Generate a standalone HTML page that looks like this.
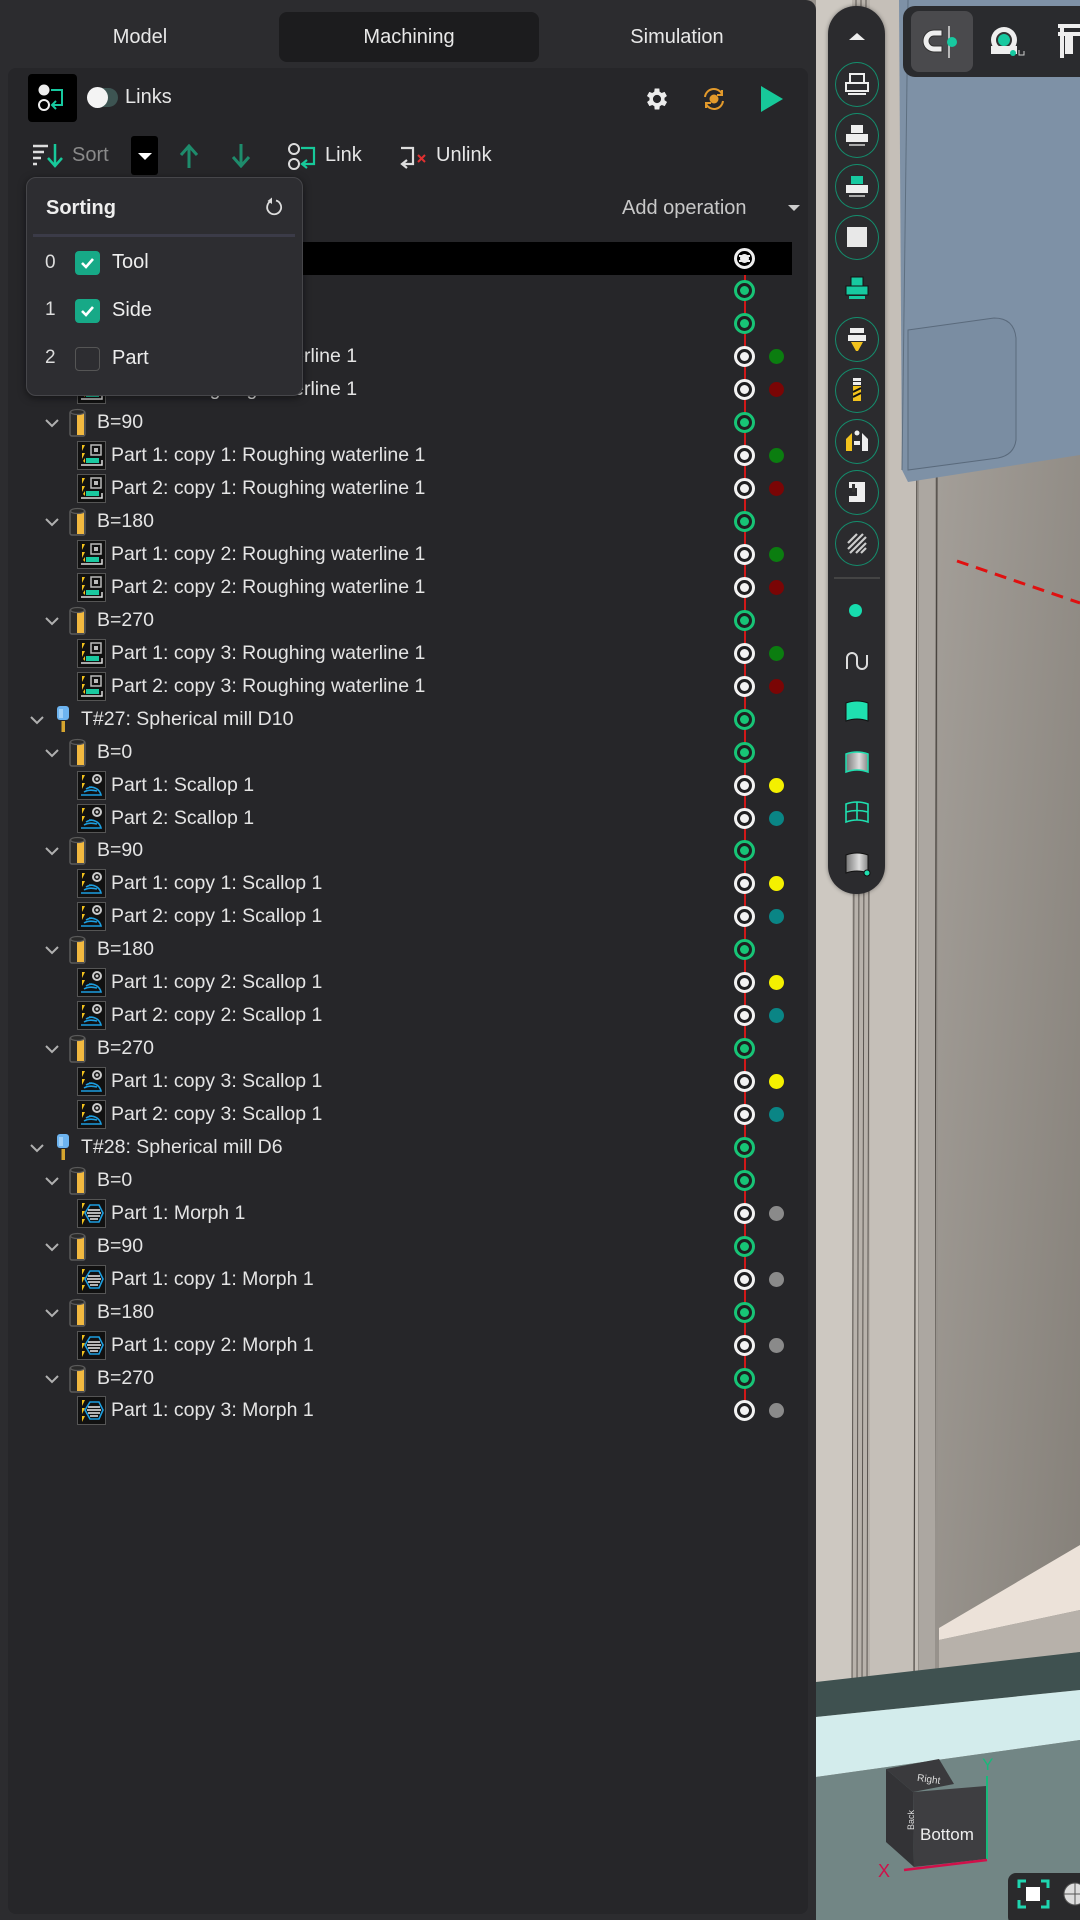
<!DOCTYPE html>
<html><head><meta charset="utf-8">
<style>
*{margin:0;padding:0;box-sizing:border-box}
body{width:1080px;height:1920px;overflow:hidden;background:#97928c;font-family:"Liberation Sans",sans-serif;position:relative}
.abs{position:absolute}
#panel{position:absolute;left:0;top:0;width:816px;height:1920px;background:#2c2c2f;border-radius:0 10px 0 0}
#inner{position:absolute;left:8px;top:68px;width:800px;height:1846px;background:#262629;border-radius:8px}
.tab{position:absolute;top:12px;height:50px;line-height:50px;text-align:center;color:#e8e8e8;font-size:20px}
.r{position:absolute;left:0;width:816px;height:33px}
.t{position:absolute;top:0;line-height:33px;font-size:19.5px;color:#e4e4e4;white-space:nowrap}
.ch{position:absolute;top:8px;width:18px;height:18px}
.ti{position:absolute;top:3px;width:16px;height:28px}
.bi{position:absolute;top:2px;width:20px;height:30px}
.oi{position:absolute;left:77px;top:2px;width:29px;height:29px}
.c{position:absolute;left:734px;top:6px;width:21px;height:21px;border-radius:50%;border:3px solid #f2f2f2;background:#1f1f21}
.c::after{content:"";position:absolute;left:3px;top:3px;width:9px;height:9px;border-radius:50%;background:#f2f2f2}
.c.g{border-color:#17c476}
.c.g::after{background:#17c476}
.d{position:absolute;left:769px;top:9px;width:15px;height:15px;border-radius:50%}
.pb{position:absolute;left:835px;width:44px;height:45px;border-radius:50%;border:1.5px solid #148c6c}
.pbi{position:absolute;left:843px;width:28px;height:28px}
</style></head><body>

<svg width="0" height="0" style="position:absolute">
<defs>
<symbol id="chev" viewBox="0 0 18 18"><polyline points="3,6 9,12 15,6" fill="none" stroke="#b0b0b0" stroke-width="2"/></symbol>
<symbol id="tool" viewBox="0 0 16 28"><rect x="2" y="0" width="12" height="14" rx="3" fill="#6db4f0"/><rect x="4" y="3" width="4" height="9" fill="#9fd0f7"/><rect x="6.5" y="15" width="3.5" height="11" fill="#d6a52e"/></symbol>
<symbol id="side" viewBox="0 0 20 30"><rect x="2" y="3" width="15" height="25" rx="2" fill="#2a2a2a" stroke="#5a5a5a" stroke-width="1.5"/><rect x="9" y="5" width="7" height="22" fill="#f2b940"/><ellipse cx="9.5" cy="4" rx="7" ry="2.5" fill="#2a2a2a" stroke="#5a5a5a" stroke-width="1.2"/></symbol>
<symbol id="rough" viewBox="0 0 29 29"><rect x="0.5" y="0.5" width="28" height="28" fill="#111" stroke="#555"/><path d="M5 4 L8 4 L5 10 Z M5 12 L8 12 L5 18 Z M6 20 L8 17 L8 22 Z" fill="#f2c21d"/><rect x="14" y="4" width="10" height="10" fill="none" stroke="#bbb" stroke-width="1.5"/><rect x="17" y="7" width="4" height="4" fill="#bbb"/><rect x="9" y="17" width="13" height="5" fill="#1ac9a0"/><path d="M4 24 L25 24 L25 19" fill="none" stroke="#ddd" stroke-width="1.5"/></symbol>
<symbol id="scal" viewBox="0 0 29 29"><rect x="0.5" y="0.5" width="28" height="28" fill="#111" stroke="#555"/><path d="M5 4 L8 4 L5 10 Z M5 12 L8 12 L5 18 Z" fill="#f2c21d"/><circle cx="20" cy="8" r="4" fill="none" stroke="#ccc" stroke-width="2"/><circle cx="20" cy="8" r="1.5" fill="#ccc"/><path d="M4 24 L24 24 Q22 16 12 16 M7 21 Q12 18 20 20 M9 18 Q14 15 18 17" fill="none" stroke="#1c9ee0" stroke-width="1.6"/></symbol>
<symbol id="morph" viewBox="0 0 29 29"><rect x="0.5" y="0.5" width="28" height="28" fill="#111" stroke="#555"/><path d="M5 4 L8 4 L5 10 Z M5 12 L8 12 L5 18 Z M5 20 L8 20 L5 26 Z" fill="#f2c21d"/><path d="M8 14 L13 6 L22 6 L26 14 L22 23 L13 23 Z" fill="none" stroke="#1c9ee0" stroke-width="1.6"/><path d="M11 11 H23 M10 14 H24 M11 17 H23 M13 20 H21" stroke="#eee" stroke-width="1.4"/></symbol>
</defs></svg>

<!-- Scene -->
<svg class="abs" style="left:816px;top:0" width="264" height="1920" viewBox="0 0 264 1920">
<defs><linearGradient id="wall" x1="0" y1="0" x2="1" y2="1"><stop offset="0" stop-color="#a8a39d"/><stop offset="1" stop-color="#858079"/></linearGradient></defs>
<rect width="264" height="1920" fill="#97928c"/>
<rect x="122" y="0" width="142" height="1700" fill="url(#wall)"/>
<rect x="0" y="0" width="36" height="1690" fill="#cdc8c1"/>
<rect x="36" y="0" width="18" height="1690" fill="#b8b2ab"/>
<path d="M40 0 L36 1690 M45 0 L41 1690 M50 0 L46 1690 M55 0 L51 1690" stroke="#5a5550" stroke-width="1"/>
<rect x="54" y="0" width="48" height="1700" fill="#c5bfb8"/>
<path d="M102 0 L98 1700 M122 0 L118 1700" stroke="#4a4540" stroke-width="1.2"/>
<rect x="103" y="0" width="16" height="1700" fill="#aca7a1"/>
<polygon points="83,0 264,0 264,455 92,482 86,470" fill="#7e91a6"/>
<path d="M92 330 L178 318 Q198 318 200 338 L200 440 Q198 455 182 458 L92 470 Z" fill="#7a8da2" stroke="#5a6a7c" stroke-width="1"/>
<path d="M92 0 L86 470" stroke="#5e6f80" stroke-width="1"/>
<path d="M141 561 L264 603" stroke="#e01010" stroke-width="3" stroke-dasharray="12 8"/>
<polygon points="123,1628 264,1545 264,1610 123,1640" fill="#ece2d9"/>
<polygon points="123,1640 264,1610 264,1652 123,1670" fill="#b7b1aa"/>
<polygon points="0,1682 264,1652 264,1690 0,1717" fill="#3f5150"/>
<polygon points="0,1717 264,1690 264,1740 0,1777" fill="#d3ecec"/>
<polygon points="0,1777 264,1740 264,1920 0,1920" fill="#728685"/>
<polygon points="70,1769 123,1759 138,1784 97,1792" fill="#3a3a3d"/>
<polygon points="70,1769 97,1792 98,1867 70,1842" fill="#333336"/>
<polygon points="97,1792 170,1786 170,1859 98,1867" fill="#3e3e41"/>
<text x="104" y="1840" font-size="17" fill="#eee" font-family="Liberation Sans">Bottom</text>
<text x="101" y="1782" font-size="10" fill="#ddd" font-family="Liberation Sans" transform="rotate(8 110 1780)">Right</text>
<text x="88" y="1840" font-size="9" fill="#ddd" font-family="Liberation Sans" transform="rotate(-90 88 1830)">Back</text>
<path d="M171 1776 L171 1859" stroke="#18b97a" stroke-width="2"/>
<path d="M88 1870 L171 1860" stroke="#d0104a" stroke-width="2.5"/>
<text x="166" y="1770" font-size="17" fill="#18b97a" font-family="Liberation Sans">Y</text>
<text x="62" y="1877" font-size="18" fill="#d0104a" font-family="Liberation Sans">X</text>
<rect x="192" y="1873" width="80" height="52" rx="8" fill="#2a2a2c"/>
<path d="M203 1888 V1881 H210 M225 1881 H232 V1888 M232 1900 V1907 H225 M210 1907 H203 V1900" fill="none" stroke="#1fd6b0" stroke-width="3"/>
<rect x="210" y="1887" width="14" height="14" fill="#fff"/>
<circle cx="259" cy="1894" r="11" fill="#ddd" stroke="#555"/>
<path d="M248 1894 H270 M259 1883 V1905" stroke="#555"/>
</svg>

<!-- top right toolbar -->
<div class="abs" style="left:903px;top:6px;width:190px;height:71px;background:#2a2b2e;border-radius:12px"></div>
<div class="abs" style="left:911px;top:11px;width:62px;height:61px;background:#4a4a4d;border-radius:8px"></div>
<svg class="abs" style="left:920px;top:22px" width="46" height="40" viewBox="0 0 46 40"><path d="M22 8 H14 A11 11 0 0 0 14 30 H22 V24 H14 A5 5 0 0 1 14 14 H22 Z" fill="#eee" stroke="#333"/><path d="M29 4 V36" stroke="#ddd" stroke-width="1.5"/><circle cx="32" cy="20" r="5" fill="#17c9a0"/></svg>
<svg class="abs" style="left:988px;top:24px" width="40" height="36" viewBox="0 0 40 36"><circle cx="16" cy="16" r="13" fill="#eee"/><circle cx="16" cy="16" r="7" fill="#17c9a0" stroke="#333" stroke-width="2"/><rect x="3" y="22" width="26" height="8" fill="#eee"/><circle cx="25" cy="29" r="3" fill="#17c9a0"/><path d="M31 26 V31 H36 V27" stroke="#ccc" fill="none"/></svg>
<svg class="abs" style="left:1056px;top:22px" width="24" height="40" viewBox="0 0 24 40"><path d="M2 4 H24 M6 4 V36 M2 12 H24" stroke="#eee" stroke-width="4" fill="none"/><rect x="9" y="14" width="8" height="18" fill="#eee"/></svg>

<!-- side pill -->
<div class="abs" style="left:828px;top:6px;width:57px;height:888px;background:#2b2b2e;border-radius:28px;box-shadow:0 0 4px rgba(0,0,0,.4)"></div>
<div class="abs" style="left:849px;top:33px;width:0;height:0;border-left:8px solid transparent;border-right:8px solid transparent;border-bottom:7px solid #eee"></div>
<div class="pb" style="top:62px"></div>
<svg class="pbi" style="top:70px" viewBox="0 0 28 28"><rect x="7" y="4" width="14" height="9" fill="none" stroke="#eee" stroke-width="2"/><rect x="3" y="13" width="22" height="8" fill="none" stroke="#eee" stroke-width="2"/><rect x="5" y="23" width="18" height="2" fill="#eee"/></svg>
<div class="pb" style="top:113px"></div>
<svg class="pbi" style="top:121px" viewBox="0 0 28 28"><rect x="8" y="4" width="12" height="8" fill="#eee"/><rect x="3" y="13" width="22" height="8" fill="#eee"/><rect x="6" y="23" width="16" height="2" fill="#aaa"/></svg>
<div class="pb" style="top:164px"></div>
<svg class="pbi" style="top:172px" viewBox="0 0 28 28"><rect x="8" y="4" width="12" height="8" fill="#17c9a0"/><rect x="3" y="13" width="22" height="8" fill="#eee"/><rect x="6" y="23" width="16" height="2" fill="#aaa"/></svg>
<div class="pb" style="top:215px"></div>
<svg class="pbi" style="top:223px" viewBox="0 0 28 28"><rect x="4" y="4" width="20" height="20" fill="#e8e8e8"/></svg>
<svg class="pbi" style="top:274px" viewBox="0 0 28 28"><rect x="8" y="3" width="12" height="9" fill="#17c9a0" stroke="#111"/><rect x="3" y="12" width="22" height="9" fill="#17c9a0" stroke="#111"/><rect x="6" y="22" width="16" height="3" fill="#17c9a0"/></svg>
<div class="pb" style="top:317px"></div>
<svg class="pbi" style="top:325px" viewBox="0 0 28 28"><rect x="7" y="3" width="14" height="5" fill="#eee"/><rect x="5" y="10" width="18" height="6" fill="#eee"/><path d="M8 17 H20 L15 26 H13 Z" fill="#f2c21d"/></svg>
<div class="pb" style="top:368px"></div>
<svg class="pbi" style="top:376px" viewBox="0 0 28 28"><rect x="10" y="2" width="8" height="3" fill="#eee"/><rect x="10" y="6" width="8" height="3" fill="#eee"/><rect x="10" y="10" width="8" height="15" fill="#f2c21d"/><path d="M10 16 L18 12 M10 21 L18 17" stroke="#111" stroke-width="2"/></svg>
<div class="pb" style="top:419px"></div>
<svg class="pbi" style="top:427px" viewBox="0 0 28 28"><path d="M3 24 V12 L9 6 V24 Z" fill="#f2c21d"/><path d="M19 6 L25 12 V24 H19 Z" fill="#eee"/><circle cx="14" cy="6" r="2.5" fill="#eee"/><rect x="11" y="14" width="6" height="4" fill="#eee"/></svg>
<div class="pb" style="top:470px"></div>
<svg class="pbi" style="top:478px" viewBox="0 0 28 28"><path d="M6 4 H22 V24 H6 V18 H14 V10 H6 Z" fill="#eee"/><rect x="9" y="6" width="3" height="8" fill="#333"/></svg>
<div class="pb" style="top:521px"></div>
<svg class="pbi" style="top:529px" viewBox="0 0 28 28"><path d="M5 14 L14 5 M5 20 L20 5 M7 24 L23 8 M13 24 L23 14 M18 24 L23 19" stroke="#ccc" stroke-width="2.2"/></svg>
<div class="abs" style="left:834px;top:577px;width:46px;height:2px;background:#444"></div>
<div class="abs" style="left:849px;top:604px;width:13px;height:13px;border-radius:50%;background:#17dcae"></div>
<svg class="pbi" style="top:647px" viewBox="0 0 28 28"><path d="M4 22 V11 A5 5 0 0 1 14 11 V17 A5 5 0 0 0 24 17 V8" fill="none" stroke="#ddd" stroke-width="2"/></svg>
<svg class="pbi" style="top:697px" viewBox="0 0 28 28"><path d="M3 6 Q14 2 25 6 V24 Q14 20 3 24 Z" fill="#1fe0b0" stroke="#111"/></svg>
<svg class="pbi" style="top:748px" viewBox="0 0 28 28"><defs><linearGradient id="mg" x1="0" x2="1"><stop offset="0" stop-color="#777"/><stop offset=".6" stop-color="#ddd"/><stop offset="1" stop-color="#888"/></linearGradient></defs><path d="M3 6 Q14 2 25 6 V24 Q14 20 3 24 Z" fill="url(#mg)" stroke="#1fe0b0" stroke-width="1.5"/></svg>
<svg class="pbi" style="top:798px" viewBox="0 0 28 28"><path d="M3 6 Q14 2 25 6 V24 Q14 20 3 24 Z M14 4 V22 M3 14 Q14 11 25 14" fill="none" stroke="#1fe0b0" stroke-width="1.6"/></svg>
<svg class="pbi" style="top:849px" viewBox="0 0 28 28"><path d="M3 6 Q14 2 25 6 V24 Q14 20 3 24 Z" fill="url(#mg)" stroke="#111"/><circle cx="24" cy="24" r="3" fill="#1fe0b0" stroke="#111"/></svg>

<!-- Panel -->
<div id="panel">
<div class="tab" style="left:40px;width:200px">Model</div>
<div class="tab" style="left:279px;width:260px;background:#1c1c1e;border-radius:8px">Machining</div>
<div class="tab" style="left:577px;width:200px">Simulation</div>
<div id="inner"></div>

<div class="abs" style="left:28px;top:74px;width:49px;height:48px;background:#000;border-radius:4px"></div>
<svg class="abs" style="left:34px;top:80px" width="36" height="36" viewBox="0 0 36 36"><circle cx="10" cy="10" r="5.5" fill="#eee"/><circle cx="10" cy="25" r="5" fill="none" stroke="#eee" stroke-width="2"/><path d="M17 10 H28 V25 H19 M22 21 L18 25 L22 29" fill="none" stroke="#17c9a0" stroke-width="2"/></svg>
<div class="abs" style="left:89px;top:88px;width:29px;height:19px;border-radius:10px;background:#3d5452"></div>
<div class="abs" style="left:87px;top:87px;width:21px;height:21px;border-radius:50%;background:#f4f4f4"></div>
<div class="abs" style="left:125px;top:86px;font-size:20px;color:#e6e6e6">Links</div>

<svg class="abs" style="left:643px;top:85px" width="28" height="28" viewBox="0 0 24 24"><path fill="#ececec" d="M19.4 13a7.5 7.5 0 0 0 0-2l2.1-1.6-2-3.5-2.5 1a7 7 0 0 0-1.7-1L15 3h-4l-.4 2.9a7 7 0 0 0-1.7 1l-2.5-1-2 3.5L6.6 11a7.5 7.5 0 0 0 0 2l-2.1 1.6 2 3.5 2.5-1a7 7 0 0 0 1.7 1L11 21h4l.4-2.9a7 7 0 0 0 1.7-1l2.5 1 2-3.5zM13 15.5a3.5 3.5 0 1 1 0-7 3.5 3.5 0 0 1 0 7z" transform="translate(-1 0)"/></svg>
<svg class="abs" style="left:700px;top:85px" width="28" height="28" viewBox="0 0 28 28"><circle cx="14" cy="14" r="4.5" fill="#e39a2b"/><path d="M5 12 A9 9 0 0 1 22 9 M23 16 A9 9 0 0 1 6 19" fill="none" stroke="#e39a2b" stroke-width="2"/><path d="M22 5 V10 H17 M6 23 V18 H11" fill="none" stroke="#e39a2b" stroke-width="2"/></svg>
<svg class="abs" style="left:761px;top:86px" width="22" height="26" viewBox="0 0 22 26"><path d="M0 0 L22 13 L0 26 Z" fill="#17c99a"/></svg>

<svg class="abs" style="left:33px;top:144px" width="32" height="24" viewBox="0 0 32 24"><path d="M0 2 H15 M0 8 H11 M0 14 H8 M0 20 H4" stroke="#ddd" stroke-width="2.5"/><path d="M22 0 V20 M15 14 L22 22 L29 14" fill="none" stroke="#17c99a" stroke-width="2.5"/></svg>
<div class="abs" style="left:72px;top:144px;font-size:20px;color:#8a8a8a">Sort</div>
<div class="abs" style="left:131px;top:136px;width:27px;height:39px;background:#000;border-radius:3px"></div>
<div class="abs" style="left:138px;top:153px;width:0;height:0;border-left:7px solid transparent;border-right:7px solid transparent;border-top:7px solid #fff"></div>
<svg class="abs" style="left:179px;top:144px" width="20" height="24" viewBox="0 0 20 24"><path d="M10 24 V4 M2 11 L10 2 L18 11" fill="none" stroke="#1e8c6c" stroke-width="3"/></svg>
<svg class="abs" style="left:231px;top:144px" width="20" height="24" viewBox="0 0 20 24"><path d="M10 0 V20 M2 13 L10 22 L18 13" fill="none" stroke="#1e8c6c" stroke-width="3"/></svg>
<svg class="abs" style="left:287px;top:142px" width="30" height="30" viewBox="0 0 30 30"><circle cx="7" cy="7" r="5" fill="none" stroke="#ddd" stroke-width="2"/><circle cx="7" cy="22" r="5" fill="none" stroke="#ddd" stroke-width="2"/><path d="M14 6 H27 V22 H16 M20 18 L15 22 L20 26" fill="none" stroke="#17c99a" stroke-width="2.2"/></svg>
<div class="abs" style="left:325px;top:144px;font-size:20px;color:#e6e6e6">Link</div>
<svg class="abs" style="left:399px;top:142px" width="30" height="30" viewBox="0 0 30 30"><path d="M2 6 H14 V22 H4 M8 18 L3 22 L8 26" fill="none" stroke="#ddd" stroke-width="2.2"/><path d="M19 13 L26 20 M26 13 L19 20" stroke="#e03030" stroke-width="2"/></svg>
<div class="abs" style="left:436px;top:144px;font-size:20px;color:#e6e6e6">Unlink</div>

<div class="abs" style="left:622px;top:197px;font-size:20px;color:#c8c8c8">Add operation</div>
<div class="abs" style="left:788px;top:205px;width:0;height:0;border-left:6px solid transparent;border-right:6px solid transparent;border-top:6px solid #ccc"></div>

<!-- timeline line -->
<div class="abs" style="left:744px;top:259px;width:1.5px;height:1152px;background:#d01818"></div>

<!-- rows -->
<div class="r" style="top:241.5px"><div class="abs" style="left:26px;top:0;width:766px;height:33px;background:#000"></div><div class="c" style="border-color:#eee;background:#000"></div><div class="abs" style="left:739px;top:13px;width:11px;height:2px;background:#eee"></div><div class="abs" style="left:739px;top:18px;width:11px;height:2px;background:#eee"></div></div>
<div class="r" style="top:274.4px"><svg class="ch" style="left:28px"><use href="#chev"/></svg><svg class="ti" style="left:55px"><use href="#tool"/></svg><div class="t" style="left:81px">T#26: End mill D12</div><div class="c g"></div></div>
<div class="r" style="top:307.4px"><svg class="ch" style="left:43px"><use href="#chev"/></svg><svg class="bi" style="left:68px"><use href="#side"/></svg><div class="t" style="left:97px">B=0</div><div class="c g"></div></div>
<div class="r" style="top:340.3px"><svg class="oi"><use href="#rough"/></svg><div class="t" style="left:111px">Part 1: Roughing waterline 1</div><div class="c"></div><div class="d" style="background:#0b7d10"></div></div>
<div class="r" style="top:373.3px"><svg class="oi"><use href="#rough"/></svg><div class="t" style="left:111px">Part 2: Roughing waterline 1</div><div class="c"></div><div class="d" style="background:#7a0505"></div></div>
<div class="r" style="top:406.2px"><svg class="ch" style="left:43px"><use href="#chev"/></svg><svg class="bi" style="left:68px"><use href="#side"/></svg><div class="t" style="left:97px">B=90</div><div class="c g"></div></div>
<div class="r" style="top:439.1px"><svg class="oi"><use href="#rough"/></svg><div class="t" style="left:111px">Part 1: copy 1: Roughing waterline 1</div><div class="c"></div><div class="d" style="background:#0b7d10"></div></div>
<div class="r" style="top:472.1px"><svg class="oi"><use href="#rough"/></svg><div class="t" style="left:111px">Part 2: copy 1: Roughing waterline 1</div><div class="c"></div><div class="d" style="background:#7a0505"></div></div>
<div class="r" style="top:505.0px"><svg class="ch" style="left:43px"><use href="#chev"/></svg><svg class="bi" style="left:68px"><use href="#side"/></svg><div class="t" style="left:97px">B=180</div><div class="c g"></div></div>
<div class="r" style="top:538.0px"><svg class="oi"><use href="#rough"/></svg><div class="t" style="left:111px">Part 1: copy 2: Roughing waterline 1</div><div class="c"></div><div class="d" style="background:#0b7d10"></div></div>
<div class="r" style="top:570.9px"><svg class="oi"><use href="#rough"/></svg><div class="t" style="left:111px">Part 2: copy 2: Roughing waterline 1</div><div class="c"></div><div class="d" style="background:#7a0505"></div></div>
<div class="r" style="top:603.8px"><svg class="ch" style="left:43px"><use href="#chev"/></svg><svg class="bi" style="left:68px"><use href="#side"/></svg><div class="t" style="left:97px">B=270</div><div class="c g"></div></div>
<div class="r" style="top:636.8px"><svg class="oi"><use href="#rough"/></svg><div class="t" style="left:111px">Part 1: copy 3: Roughing waterline 1</div><div class="c"></div><div class="d" style="background:#0b7d10"></div></div>
<div class="r" style="top:669.7px"><svg class="oi"><use href="#rough"/></svg><div class="t" style="left:111px">Part 2: copy 3: Roughing waterline 1</div><div class="c"></div><div class="d" style="background:#7a0505"></div></div>
<div class="r" style="top:702.7px"><svg class="ch" style="left:28px"><use href="#chev"/></svg><svg class="ti" style="left:55px"><use href="#tool"/></svg><div class="t" style="left:81px">T#27: Spherical mill D10</div><div class="c g"></div></div>
<div class="r" style="top:735.6px"><svg class="ch" style="left:43px"><use href="#chev"/></svg><svg class="bi" style="left:68px"><use href="#side"/></svg><div class="t" style="left:97px">B=0</div><div class="c g"></div></div>
<div class="r" style="top:768.5px"><svg class="oi"><use href="#scal"/></svg><div class="t" style="left:111px">Part 1: Scallop 1</div><div class="c"></div><div class="d" style="background:#f4f000"></div></div>
<div class="r" style="top:801.5px"><svg class="oi"><use href="#scal"/></svg><div class="t" style="left:111px">Part 2: Scallop 1</div><div class="c"></div><div class="d" style="background:#0a8585"></div></div>
<div class="r" style="top:834.4px"><svg class="ch" style="left:43px"><use href="#chev"/></svg><svg class="bi" style="left:68px"><use href="#side"/></svg><div class="t" style="left:97px">B=90</div><div class="c g"></div></div>
<div class="r" style="top:867.4px"><svg class="oi"><use href="#scal"/></svg><div class="t" style="left:111px">Part 1: copy 1: Scallop 1</div><div class="c"></div><div class="d" style="background:#f4f000"></div></div>
<div class="r" style="top:900.3px"><svg class="oi"><use href="#scal"/></svg><div class="t" style="left:111px">Part 2: copy 1: Scallop 1</div><div class="c"></div><div class="d" style="background:#0a8585"></div></div>
<div class="r" style="top:933.2px"><svg class="ch" style="left:43px"><use href="#chev"/></svg><svg class="bi" style="left:68px"><use href="#side"/></svg><div class="t" style="left:97px">B=180</div><div class="c g"></div></div>
<div class="r" style="top:966.2px"><svg class="oi"><use href="#scal"/></svg><div class="t" style="left:111px">Part 1: copy 2: Scallop 1</div><div class="c"></div><div class="d" style="background:#f4f000"></div></div>
<div class="r" style="top:999.1px"><svg class="oi"><use href="#scal"/></svg><div class="t" style="left:111px">Part 2: copy 2: Scallop 1</div><div class="c"></div><div class="d" style="background:#0a8585"></div></div>
<div class="r" style="top:1032.1px"><svg class="ch" style="left:43px"><use href="#chev"/></svg><svg class="bi" style="left:68px"><use href="#side"/></svg><div class="t" style="left:97px">B=270</div><div class="c g"></div></div>
<div class="r" style="top:1065.0px"><svg class="oi"><use href="#scal"/></svg><div class="t" style="left:111px">Part 1: copy 3: Scallop 1</div><div class="c"></div><div class="d" style="background:#f4f000"></div></div>
<div class="r" style="top:1097.9px"><svg class="oi"><use href="#scal"/></svg><div class="t" style="left:111px">Part 2: copy 3: Scallop 1</div><div class="c"></div><div class="d" style="background:#0a8585"></div></div>
<div class="r" style="top:1130.9px"><svg class="ch" style="left:28px"><use href="#chev"/></svg><svg class="ti" style="left:55px"><use href="#tool"/></svg><div class="t" style="left:81px">T#28: Spherical mill D6</div><div class="c g"></div></div>
<div class="r" style="top:1163.8px"><svg class="ch" style="left:43px"><use href="#chev"/></svg><svg class="bi" style="left:68px"><use href="#side"/></svg><div class="t" style="left:97px">B=0</div><div class="c g"></div></div>
<div class="r" style="top:1196.8px"><svg class="oi"><use href="#morph"/></svg><div class="t" style="left:111px">Part 1: Morph 1</div><div class="c"></div><div class="d" style="background:#8a8a8a"></div></div>
<div class="r" style="top:1229.7px"><svg class="ch" style="left:43px"><use href="#chev"/></svg><svg class="bi" style="left:68px"><use href="#side"/></svg><div class="t" style="left:97px">B=90</div><div class="c g"></div></div>
<div class="r" style="top:1262.6px"><svg class="oi"><use href="#morph"/></svg><div class="t" style="left:111px">Part 1: copy 1: Morph 1</div><div class="c"></div><div class="d" style="background:#8a8a8a"></div></div>
<div class="r" style="top:1295.6px"><svg class="ch" style="left:43px"><use href="#chev"/></svg><svg class="bi" style="left:68px"><use href="#side"/></svg><div class="t" style="left:97px">B=180</div><div class="c g"></div></div>
<div class="r" style="top:1328.5px"><svg class="oi"><use href="#morph"/></svg><div class="t" style="left:111px">Part 1: copy 2: Morph 1</div><div class="c"></div><div class="d" style="background:#8a8a8a"></div></div>
<div class="r" style="top:1361.5px"><svg class="ch" style="left:43px"><use href="#chev"/></svg><svg class="bi" style="left:68px"><use href="#side"/></svg><div class="t" style="left:97px">B=270</div><div class="c g"></div></div>
<div class="r" style="top:1394.4px"><svg class="oi"><use href="#morph"/></svg><div class="t" style="left:111px">Part 1: copy 3: Morph 1</div><div class="c"></div><div class="d" style="background:#8a8a8a"></div></div>

<!-- Sorting popup -->
<div class="abs" style="left:26px;top:177px;width:277px;height:219px;background:#2d2d31;border:1px solid #46464a;border-radius:10px;box-shadow:0 2px 8px rgba(0,0,0,.5)"></div>
<div class="abs" style="left:46px;top:197px;font-size:20px;font-weight:bold;color:#eee">Sorting</div>
<svg class="abs" style="left:264px;top:197px" width="20" height="20" viewBox="0 0 20 20"><path d="M7 4 A7 7 0 1 0 12 3.5" fill="none" stroke="#ddd" stroke-width="1.8"/><path d="M8 0.5 L8 7 L3.5 4 Z" fill="#ddd"/></svg>
<div class="abs" style="left:33px;top:234px;width:262px;height:3px;background:#3b3b48"></div>
<div class="abs" style="left:45px;top:252px;font-size:19px;color:#ddd">0</div>
<div class="abs" style="left:75px;top:251px;width:25px;height:24px;border-radius:4px;background:#17a987"></div>
<svg class="abs" style="left:79px;top:255px" width="17" height="16" viewBox="0 0 17 16"><path d="M3 8 L7 12 L14 4" fill="none" stroke="#fff" stroke-width="2.6"/></svg>
<div class="abs" style="left:112px;top:251px;font-size:20px;color:#eee">Tool</div>
<div class="abs" style="left:45px;top:299px;font-size:19px;color:#ddd">1</div>
<div class="abs" style="left:75px;top:299px;width:25px;height:24px;border-radius:4px;background:#17a987"></div>
<svg class="abs" style="left:79px;top:303px" width="17" height="16" viewBox="0 0 17 16"><path d="M3 8 L7 12 L14 4" fill="none" stroke="#fff" stroke-width="2.6"/></svg>
<div class="abs" style="left:112px;top:299px;font-size:20px;color:#eee">Side</div>
<div class="abs" style="left:45px;top:347px;font-size:19px;color:#ddd">2</div>
<div class="abs" style="left:75px;top:347px;width:25px;height:24px;border-radius:4px;border:1.5px solid #555"></div>
<div class="abs" style="left:112px;top:347px;font-size:20px;color:#eee">Part</div>
</div>
</body></html>
